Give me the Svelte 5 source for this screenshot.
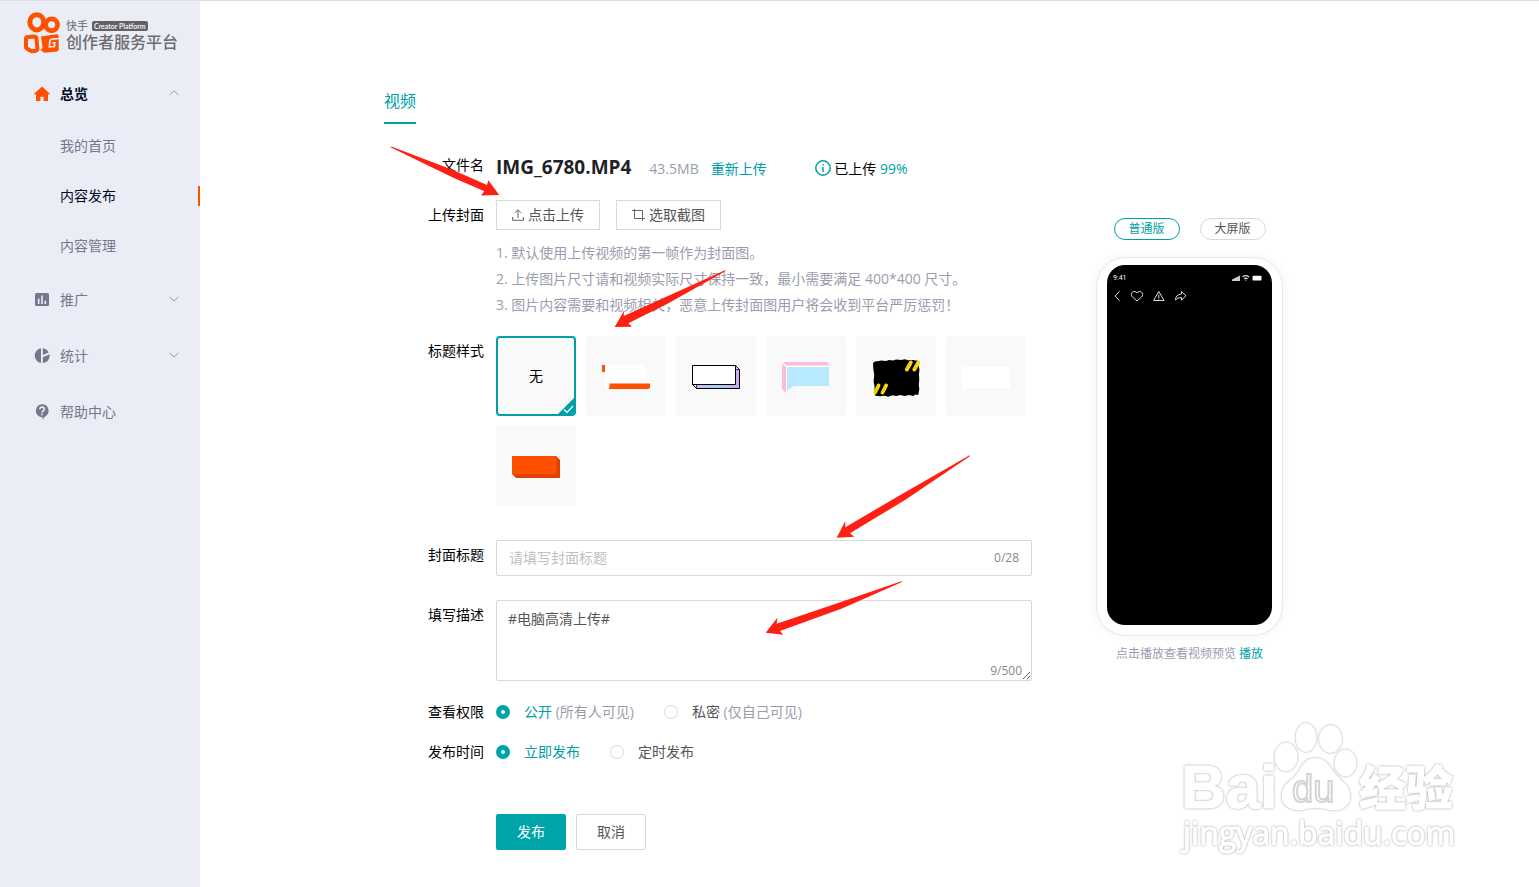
<script>
  const subItems = ["我的首页", "内容发布", "内容管理"];
  const groups = [
    { id: "promo", label: "推广", expandable: true },
    { id: "stats", label: "统计", expandable: true },
    { id: "help", label: "帮助中心", expandable: false },
  ];
  const hints = [
    "1. 默认使用上传视频的第一帧作为封面图。",
    "2. 上传图片尺寸请和视频实际尺寸保持一致，最小需要满足 400*400 尺寸。",
    "3. 图片内容需要和视频相关，恶意上传封面图用户将会收到平台严厉惩罚！",
  ];
  const titleStyles = ["none", "corner", "box", "bubble", "brush", "plain", "block"];

  let activeItem = $state("内容发布");
  let titleStyle = $state("none");
  let coverTitle = $state("");
  let description = $state("#电脑高清上传#");
  let visibility = $state("public");
  let publishTime = $state("now");
  let previewMode = $state("normal");

  const descriptionCount = $derived(description.length + 1);
</script>

{#snippet chevron(up)}
  <svg class="chevron" width="12" height="10" viewBox="0 0 12 10" aria-hidden="true">
    <path d={up ? "M1.5 6 6 1.8 10.5 6" : "M1.5 1.8 6 6 10.5 1.8"} />
  </svg>
{/snippet}

<div class="page">
  <aside class="sidebar">
    <div class="logo">
      <svg width="37" height="44" viewBox="23 11 37 44" aria-hidden="true">
        <g fill="none" stroke="#ff5000">
          <ellipse cx="36.8" cy="22.3" rx="7" ry="7.6" stroke-width="5" />
          <circle cx="51.6" cy="24.8" r="5.9" stroke-width="4.8" />
          <path d="M26 38.600q0-1.600 1.600-1.600l6.800-.6q1.600 0 2 1.800l1 10.400q0 1.800-1.600 2.100l-3.500.5q-1 .1-1.900-.5l-3.500-2.200q-.9-.7-.9-1.600z" stroke-width="4" />
        </g>
        <path fill="#ff5000" d="M41 36.500 56.500 34.300q2.200-.1 2.200 2v13.300q0 1.700-1.800 1.900l-12.500 1.200-4-2.400 2.200-2.300z" />
        <path fill="none" stroke="#eaedf6" stroke-width="1.700" d="M59 38.500l-7 .6q-2 .3-2.200 2.200l-.4 5.600 5-.4.400-3.600h-2.300" />
      </svg>
      <div class="brand">
        <div class="brand-top"><span>快手</span><span class="badge">Creator Platform</span></div>
        <div class="brand-name">创作者服务平台</div>
      </div>
    </div>

    <nav>
      <button type="button" class="nav-group open">
        <svg width="18" height="16" viewBox="0 0 18 16" aria-hidden="true">
          <path fill="#ff5000" d="M9 .6 17.400 8.300H15V15h-4.400v-4.300H7.400V15H3V8.300H.6z" />
        </svg>
        <span>总览</span>
        {@render chevron(true)}
      </button>
      {#each subItems as item}
        <button type="button" class="nav-sub" class:active={activeItem === item} onclick={() => (activeItem = item)}>
          {item}
        </button>
      {/each}
      {#each groups as group}
        <button type="button" class="nav-group">
          <svg width="18" height="16" viewBox="0 0 18 16" aria-hidden="true">
            {#if group.id === "promo"}
              <rect x="2" y="1" width="14" height="13" rx="1.5" fill="#74788d" />
              <path d="M5.700 6.500v5.500M9 3.500v8.500M12.300 8.800v3.200" stroke="#eaedf6" stroke-width="1.6" />
            {:else if group.id === "stats"}
              <path fill="#74788d" d="M8 .3v14.800A7.500 7.500 0 0 1 8 .3zM9.800.3a7.400 7.400 0 0 1 5.800 4.200L9.800 7zM16.500 6.200a7.400 7.400 0 0 1-6.700 8.900V9.200z" />
            {:else}
              <path fill="#74788d" d="M9 .2a6.500 6.500 0 0 1 3.200 12.200L9.500 15.500v-2.300A6.500 6.500 0 1 1 9 .2z" />
              <path fill="none" stroke="#eaedf6" stroke-width="1.6" d="M6.800 5.300c0-3 4.500-2.700 4.500-.1C11.300 6.700 9 6.900 9 8.700M9 9.700v1.500" />
            {/if}
          </svg>
          <span>{group.label}</span>
          {#if group.expandable}{@render chevron(false)}{/if}
        </button>
      {/each}
    </nav>
  </aside>

  <main>
    <div class="publish">
      <div class="tabs"><button type="button" class="tab">视频</button></div>

      <div class="columns">
        <form onsubmit={(e) => e.preventDefault()}>
          <div class="row file-row">
            <span class="label">文件名</span>
            <div class="control file">
              <strong>IMG_6780.MP4</strong>
              <span class="size">43.5MB</span>
              <a href="#reupload">重新上传</a>
              <span class="status">
                <svg width="16" height="16" viewBox="0 0 16 16" aria-hidden="true">
                  <circle cx="8" cy="8" r="7.2" fill="none" stroke="#00a0a5" stroke-width="1.5" />
                  <path d="M8 4v1.600M8 7v5" stroke="#00a0a5" stroke-width="1.5" />
                </svg>
                已上传 <em>99%</em>
              </span>
            </div>
          </div>

          <div class="row cover-row">
            <span class="label">上传封面</span>
            <div class="control">
              <div class="cover-buttons">
                <button type="button" class="btn small">
                  <svg width="12" height="12" viewBox="0 0 12 12" aria-hidden="true">
                    <path d="M6 9V1M3 3.800 6 .8l3 3M.6 8v3.300h10.800V8" />
                  </svg>
                  点击上传
                </button>
                <button type="button" class="btn small">
                  <svg width="13" height="12" viewBox="0 0 13 12" aria-hidden="true">
                    <path d="M2.500 0v9.500H13M0 1.500h10.500V12" />
                  </svg>
                  选取截图
                </button>
              </div>
              <div class="hints">
                {#each hints as hint}<p>{hint}</p>{/each}
              </div>
            </div>
          </div>

          <div class="row style-row">
            <span class="label">标题样式</span>
            <div class="control tiles">
              {#each titleStyles as name}
                <button
                  type="button"
                  class="tile"
                  class:selected={titleStyle === name}
                  aria-pressed={titleStyle === name}
                  aria-label={name === "none" ? undefined : name}
                  onclick={() => (titleStyle = name)}
                >
                  {#if name === "none"}
                    无
                  {:else}
                    <svg width="80" height="80" viewBox="0 0 80 80" aria-hidden="true">
                      {#if name === "corner"}
                        <path fill="#ff5000" d="M16 29h3v7h-2q-1 0-1-1z" />
                        <rect x="19" y="29" width="41" height="24" rx="2" fill="#fff" />
                        <path fill="#ff5000" d="M23.500 47.500H64V51q0 2-2 2H22.500l1-2z" />
                      {:else if name === "box"}
                        <defs>
                          <linearGradient id="edge">
                            <stop offset="0" stop-color="#d9b3f0" />
                            <stop offset=".5" stop-color="#a2d2f7" />
                            <stop offset="1" stop-color="#c9aaf0" />
                          </linearGradient>
                        </defs>
                        <path d="M16.500 48.500 20.500 52.500H63.500V33.500L59.500 29.500z" fill="url(#edge)" stroke="#000" />
                        <path d="M59.500 29.500V33.500H63.500zM16.500 48.500H20.500V52.500z" fill="#ddd" stroke="#000" stroke-width=".7" />
                        <path d="M16.500 29.500h43v19h-43z" fill="#fff" stroke="#000" />
                      {:else if name === "bubble"}
                        <path fill="#fdbbd9" d="M17 26h44l3 3.500H20.500zM16 27l4 4v26l-4-4z" />
                        <path fill="none" stroke="#fff" d="m16 26.500 4 4H63" />
                        <path fill="#b8eaff" d="M21 31h42v19H28l-7 4.500z" />
                      {:else if name === "brush"}
                        <path d="m17 27 2-1.500 4-.4 2-.6 5 .5 3-1 4 .4 3-1 5 .7 4-.8 3 1 5-.4 6 1-.5 4 1 5-.6 4 .4 5-.5 6 .5 4-1 6-3-.5-2 1.500-4-1-5 1-4-1-4 1-4-.7-4 1.500-4-1-4 .6-5-.5-1-4 .3-5-1-5 .6-7-.9-6z" />
                        <path d="m50.800 33.500 4-7M58.300 33.500l4-7M19 56.500l3.600-7M26.500 56.500l3.600-7" stroke="#fbdc0a" stroke-width="3.8" stroke-linecap="round" />
                        <path d="m50.500 33 3-5.500M58 33l3-5.500M18.700 56l3-5.500M26.200 56l3-5.500" stroke="#d6a913" stroke-width=".6" />
                      {:else if name === "plain"}
                        <path fill="#fff" d="M16 31h48v21H16z" />
                      {:else}
                        <path fill="#de4100" d="m60 30 4 4v18H20l-4-4z" />
                        <path fill="#ff5000" d="M16 30h44.500v18H16z" />
                      {/if}
                    </svg>
                  {/if}
                  {#if titleStyle === name}
                    <svg class="mark" width="18" height="18" viewBox="0 0 18 18" aria-hidden="true">
                      <path d="M18 0v18H0z" fill="#00a0a5" />
                      <path d="m7 12.500 3 3 6-6.500" fill="none" stroke="#fff" stroke-width="1.2" />
                    </svg>
                  {/if}
                </button>
              {/each}
            </div>
          </div>

          <div class="row title-row">
            <label class="label" for="cover-title">封面标题</label>
            <div class="control field">
              <input id="cover-title" type="text" placeholder="请填写封面标题" maxlength="28" bind:value={coverTitle} />
              <span class="count">{coverTitle.length}/28</span>
            </div>
          </div>

          <div class="row desc-row">
            <label class="label" for="description">填写描述</label>
            <div class="control area">
              <textarea id="description" bind:value={description}></textarea>
              <span class="count">{descriptionCount}/500</span>
            </div>
          </div>

          <div class="row visibility-row" role="radiogroup" aria-labelledby="visibility-label">
            <span class="label" id="visibility-label">查看权限</span>
            <div class="control radios">
              <label><input type="radio" value="public" bind:group={visibility} /><span>公开 <small>(所有人可见)</small></span></label>
              <label><input type="radio" value="private" bind:group={visibility} /><span>私密 <small>(仅自己可见)</small></span></label>
            </div>
          </div>

          <div class="row time-row" role="radiogroup" aria-labelledby="time-label">
            <span class="label" id="time-label">发布时间</span>
            <div class="control radios">
              <label><input type="radio" value="now" bind:group={publishTime} /><span>立即发布</span></label>
              <label><input type="radio" value="later" bind:group={publishTime} /><span>定时发布</span></label>
            </div>
          </div>

          <div class="actions">
            <button type="submit" class="btn primary">发布</button>
            <button type="button" class="btn">取消</button>
          </div>
        </form>

        <section class="preview">
          <div class="modes">
            <button type="button" class:on={previewMode === "normal"} onclick={() => (previewMode = "normal")}>普通版</button>
            <button type="button" class:on={previewMode === "full"} onclick={() => (previewMode = "full")}>大屏版</button>
          </div>
          <div class="phone">
            <div class="screen">
              <div class="statusbar">
                <span>9:41</span>
                <svg width="31" height="6" viewBox="0 0 31 6" aria-hidden="true">
                  <path fill="#ccc" d="M0 6V4.500L8 .5V6z" />
                  <path fill="none" stroke="#ddd" stroke-width="1.2" d="M10.500 2q3.300-2.600 6.600 0M12 3.800q1.800-1.500 3.600 0" />
                  <path fill="#ddd" d="m12.800 4.800 1 1.200 1-1.200z" />
                  <rect x="20.500" y=".8" width="9" height="4.700" rx="1" fill="#fff" />
                </svg>
              </div>
              <svg width="76" height="12" viewBox="0 0 76 12" class="tools" aria-hidden="true">
                <path d="M6.500 1.500 2 6l4.500 4.500" />
                <path d="M24 11 19.500 7C16.800 4 19.500 1 22 1.600q1.300.4 2 1.400.7-1 2-1.400C28.500 1 31.200 4 28.500 7z" />
                <path d="M45.800 1.500 51 10.500H40.600zM45.800 4.500V8M45.800 8.500v1" />
                <path d="M68.500 1.500 73 5.800 68.500 10V7.500q-4-.3-6 2.500 0-5.500 6-6z" />
              </svg>
            </div>
          </div>
          <p class="caption">点击播放查看视频预览 <a href="#play">播放</a></p>
        </section>
      </div>

      <svg class="arrows" width="640" height="560" viewBox="384 84 640 560" aria-hidden="true">
        <g fill="#ff2015">
          <path d="m390 147 2-.3 61 23.300 34 15 1.300-4.700 11 14.700-18.300.6 3.300-4.300-31-13.500z" />
          <path d="m725.500 270-.5 1.500L667 304l-38.700 19.300 3.700 3.400-17.300.3 9.300-16.300-.3 5.300 42-19z" />
          <path d="m970 455-.5 1.500L905 500l-55 33.300 4.300 3.400-17.600 1L845.300 521v6.300L896 497.500z" />
          <path d="m902 581-.5 1.300L842 608.500l-62 22.500 3.300 3.700-17.600-2 11.600-15-.6 6L838 603z" />
        </g>
      </svg>
    </div>

    <svg class="watermark" width="282" height="138" viewBox="1178 720 282 138" aria-hidden="true">
      <g class="wm">
        <text x="1181" y="808" class="bai">Bai</text>
        <ellipse cx="1286" cy="757" rx="11" ry="14" />
        <ellipse cx="1306" cy="737.5" rx="10" ry="14" />
        <ellipse cx="1330.5" cy="739" rx="11" ry="13.5" />
        <ellipse cx="1345.5" cy="763" rx="10.5" ry="13" />
        <path d="M1315 758.500c9 0 14 6 18 13 6 9 17 13 17 25 0 10-10 15-20 13-10-2.500-18-2.500-28 0-11 1.500-20-4-20-13 0-13 12-16 17-25 4-7 7-13 16-13z" />
        <text x="1292" y="802" class="du">du</text>
        <text x="1359" y="805" class="cn">经验</text>
        <text x="1183" y="845" class="url">jingyan.baidu.com</text>
      </g>
    </svg>
  </main>
</div>

<style>
  :global(body) { margin: 0; }
  .page {
    --teal: #00a0a5;
    --muted: #9a9cae;
    --line: #d9d9d9;
    display: flex;
    min-height: 100vh;
    box-sizing: border-box;
    border-top: 1px solid #dcdde1;
    background: #fff;
    color: #000;
    font: 14px/20px "Open Sans", "Noto Sans CJK SC", sans-serif;
  }
  button, input, textarea { font: inherit; color: inherit; box-sizing: border-box; }
  button { padding: 0; border: 0; background: none; cursor: pointer; }
  a { color: var(--teal); text-decoration: none; }
  p { margin: 0; }

  .sidebar { flex: none; width: 200px; background: #eaedf6; }
  .logo { display: flex; gap: 6px; padding: 10px 0 10px 23px; color: #6b6b70; }
  .brand { padding-top: 8px; }
  .brand-top { display: flex; align-items: center; gap: 4px; height: 14px; font-size: 11px; line-height: 14px; }
  .badge { padding: 0 2px; border-radius: 2px; background: #626266; color: #fff; font-family: Lato, sans-serif; font-size: 7px; font-weight: 600; line-height: 10px; }
  .brand-name { font-size: 16px; line-height: 18px; font-weight: 500; white-space: nowrap; }
  nav { padding-top: 1px; }
  .nav-group, .nav-sub { display: flex; align-items: center; width: 100%; color: #74788d; }
  .nav-group { height: 56px; padding: 0 20px 0 33px; gap: 9px; }
  .nav-group.open { height: 55px; color: #000b1f; font-weight: 600; }
  .nav-sub { height: 50px; padding-left: 60px; }
  .nav-sub.active {
    color: #000b1f;
    background: linear-gradient(#ff5000, #ff5000) right center / 2px 20px no-repeat;
  }
  .nav-sub + .nav-group { margin-top: 1px; }
  .chevron { margin-left: auto; fill: none; stroke: #9b9eb0; }

  main { position: relative; flex: 1; min-width: 0; padding-top: 83px; }
  .publish { position: relative; max-width: 971px; margin: 0 auto; }
  .tab { padding-bottom: 4px; border-bottom: 2px solid var(--teal); color: var(--teal); font-size: 16px; line-height: 34px; }
  .tabs { display: flex; margin-bottom: 26px; }
  .columns { display: flex; align-items: flex-start; gap: 64px; }
  form { flex: 0 1 648px; min-width: 0; }
  .row { display: flex; gap: 12px; }
  .label { flex: none; width: 100px; text-align: right; line-height: 30px; }
  .control { flex: 1; min-width: 0; }

  .file-row { margin-bottom: 20px; }
  .file { display: flex; align-items: baseline; height: 30px; line-height: 34px; white-space: nowrap; }
  .file strong { color: #1f2126; font-size: 19px; }
  .size { margin: 0 12px 0 18px; color: var(--muted); }
  .status { margin-left: 48px; }
  .status svg { vertical-align: -2px; }
  .status em { color: var(--teal); font-style: normal; }

  .btn { width: 70px; height: 36px; border: 1px solid var(--line); border-radius: 2px; background: #fff; color: #555; }
  .btn.small { display: flex; align-items: center; justify-content: center; gap: 4px; width: auto; height: 30px; padding: 0 15px; border-radius: 0; }
  .btn.small svg { fill: none; stroke: #666; }
  .btn.primary { border-color: #00a5a9; background: #00a5a9; color: #fff; }
  .cover-row { margin-bottom: 18px; }
  .cover-buttons { display: flex; gap: 16px; margin-bottom: 10px; }
  .hints { color: var(--muted); line-height: 26px; white-space: nowrap; }

  .style-row { margin-bottom: 34px; }
  .tiles { display: flex; flex-wrap: wrap; gap: 10px; }
  .tile { position: relative; width: 80px; height: 80px; border-radius: 4px; background: #f9f9f9; overflow: hidden; }
  .tile svg { display: block; }
  .tile.selected { border: 2px solid var(--teal); }
  .tile .mark { position: absolute; right: -1px; bottom: -1px; }

  .title-row { margin-bottom: 24px; }
  .field { display: flex; align-items: center; box-sizing: border-box; height: 36px; padding: 0 12px; border: 1px solid var(--line); border-radius: 2px; }
  .field input { flex: 1; min-width: 0; padding: 0; border: 0; outline: 0; background: none; }
  .field input::placeholder { color: #bfbfbf; }
  .count { color: #888; font-size: 12px; line-height: 22px; }
  .desc-row { margin-bottom: 16px; }
  .area { position: relative; }
  .area textarea { display: block; width: 100%; height: 81px; padding: 8px 11px; border: 1px solid var(--line); border-radius: 2px; outline: 0; color: #555; resize: vertical; }
  .area .count { position: absolute; right: 10px; bottom: -1px; }

  .visibility-row { margin-bottom: 10px; }
  .radios { display: flex; gap: 30px; line-height: 30px; }
  .radios label { display: flex; align-items: center; gap: 14px; color: #555; cursor: pointer; }
  .radios small { color: var(--muted); font-size: 14px; }
  .radios input { appearance: none; width: 14px; height: 14px; margin: 0; border: 1px solid var(--line); border-radius: 50%; background: #fff; }
  .radios input:checked { border: 5px solid #00a5a9; }
  .radios input:checked + span { color: var(--teal); }
  .actions { display: flex; gap: 10px; margin-top: 47px; padding-left: 112px; }

  .preview { flex: none; width: 187px; padding-top: 68px; }
  .modes { display: flex; justify-content: center; gap: 20px; margin-bottom: 17px; }
  .modes button { width: 66px; height: 22px; border: 1px solid var(--line); border-radius: 11px; color: #555; font-size: 12px; line-height: 20px; }
  .modes button.on { border-color: var(--teal); color: var(--teal); }
  .phone { padding: 7px 10px 10px; border: 1px solid #e8e8e8; border-radius: 30px; box-shadow: 0 0 10px rgba(0, 0, 0, 0.06); }
  .screen { height: 360px; box-sizing: border-box; padding: 9px 9px 0 6px; border-radius: 18px; background: #000; color: #fff; }
  .statusbar { display: flex; align-items: center; justify-content: space-between; height: 8px; font-family: Roboto, sans-serif; font-size: 7px; line-height: 8px; }
  .tools { display: block; margin-top: 8px; fill: none; stroke: #ddd; stroke-width: 1; }
  .caption { margin-top: 8px; color: var(--muted); font-size: 12px; text-align: center; white-space: nowrap; }

  .arrows { position: absolute; top: 0; left: 0; pointer-events: none; }
  .watermark { position: absolute; right: 79px; bottom: 29px; pointer-events: none; }
  .wm { fill: #fff; stroke: #fff; stroke-width: 1; filter: drop-shadow(0 0 1px rgba(0, 0, 0, 0.28)) drop-shadow(0 0 1px rgba(0, 0, 0, 0.1)); }
  .bai { font: bold 62px "Liberation Sans", sans-serif; }
  .du { font: 38px "Liberation Sans", sans-serif; stroke: #d4d4d4; stroke-width: 2; }
  .cn { font: 900 47px "Noto Sans CJK SC", sans-serif; }
  .url { font: 32px "Open Sans", sans-serif; }
</style>
